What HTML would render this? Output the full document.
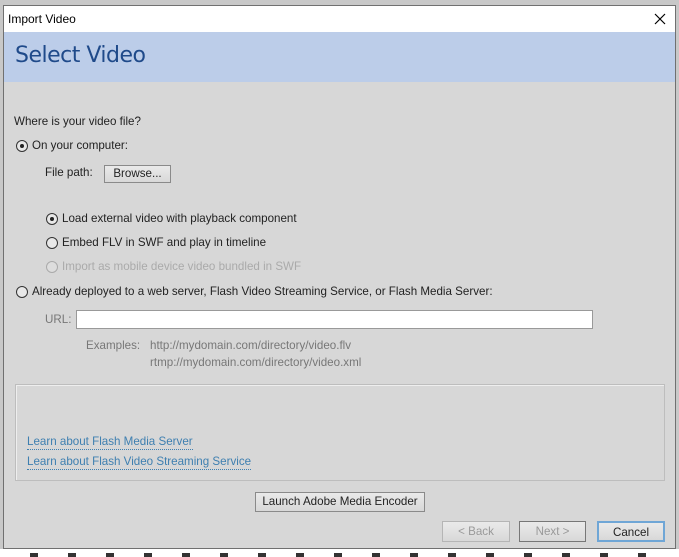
<!DOCTYPE html>
<html><head><style>
*{margin:0;padding:0;box-sizing:border-box}
body{width:679px;height:557px;overflow:hidden;background:#fff;font-family:"Liberation Sans",sans-serif;font-size:11.6px;color:#222;position:relative}
.abs{position:absolute;white-space:nowrap}
#bgl{position:absolute;left:0;top:0;width:679px;height:549px;background:#c8c8c8}
#win{position:absolute;left:3px;top:5px;width:673px;height:544px;border:1px solid #707070;background:#d7d7d7}
#title{position:absolute;left:0;top:0;width:671px;height:26px;background:#fff}
#hdr{position:absolute;left:0;top:26px;width:671px;height:50px;background:#bccde9}
.radio{position:absolute;width:12px;height:12px;border:1px solid #333;border-radius:50%;background:#e8e8e8}
.radio.on::after{content:"";position:absolute;left:3px;top:3px;width:4px;height:4px;border-radius:50%;background:#222}
.radio.dis{border-color:#aaa}
.btn{position:absolute;border:1px solid #8a8a8a;background:linear-gradient(#eaeaea,#d8d8d8);text-align:center;color:#222;font-size:11.6px}
.link{color:#3e7fb0;border-bottom:1px dotted #3e7fb0;line-height:14px}
.gray{color:#777}
.dis{color:#aaa}
</style></head><body>
<div id="bgl"></div>
<div id="win">
 <div id="title"></div>
 <div class="abs" style="left:4px;top:6px;font-size:12px;color:#000">Import Video</div>
 <svg class="abs" style="left:650px;top:7px" width="12" height="12"><path d="M1 1L11 11M11 1L1 11" stroke="#000" stroke-width="1.2"/></svg>
 <div id="hdr"></div>
 <div class="abs" style="left:11px;top:37px;font-family:'DejaVu Sans',sans-serif;font-size:22px;color:#1f4a8a;letter-spacing:-0.5px">Select Video</div>

 <div class="abs" style="left:10px;top:109px">Where is your video file?</div>
 <div class="radio on" style="left:12px;top:134px"></div>
 <div class="abs" style="left:28px;top:133px">On your computer:</div>
 <div class="abs" style="left:41px;top:160px">File path:</div>
 <div class="btn" style="left:100px;top:159px;width:67px;height:18px;line-height:16px">Browse...</div>

 <div class="radio on" style="left:42px;top:207px"></div>
 <div class="abs" style="left:58px;top:206px">Load external video with playback component</div>
 <div class="radio" style="left:42px;top:231px"></div>
 <div class="abs" style="left:58px;top:230px">Embed FLV in SWF and play in timeline</div>
 <div class="radio dis" style="left:42px;top:255px;background:#ddd"></div>
 <div class="abs dis" style="left:58px;top:254px">Import as mobile device video bundled in SWF</div>

 <div class="radio" style="left:12px;top:280px"></div>
 <div class="abs" style="left:28px;top:279px">Already deployed to a web server, Flash Video Streaming Service, or Flash Media Server:</div>
 <div class="abs gray" style="left:41px;top:307px">URL:</div>
 <div class="abs" style="left:72px;top:304px;width:517px;height:19px;background:#fff;border:1px solid #999"></div>
 <div class="abs gray" style="left:82px;top:333px">Examples:</div>
 <div class="abs gray" style="left:146px;top:333px">http://mydomain.com/directory/video.flv</div>
 <div class="abs gray" style="left:146px;top:350px">rtmp://mydomain.com/directory/video.xml</div>

 <div class="abs" style="left:11px;top:378px;width:650px;height:97px;border:1px solid #bdbdbd;box-shadow:inset 1px 1px 0 #eee"></div>
 <div class="abs link" style="left:23px;top:429px">Learn about Flash Media Server</div>
 <div class="abs link" style="left:23px;top:449px">Learn about Flash Video Streaming Service</div>

 <div class="btn" style="left:251px;top:486px;width:170px;height:20px;line-height:18px">Launch Adobe Media Encoder</div>
 <div class="btn" style="left:438px;top:515px;width:68px;height:21px;line-height:19px;color:#999;border-color:#b5b5b5">&lt; Back</div>
 <div class="btn" style="left:515px;top:515px;width:67px;height:21px;line-height:19px;color:#999;border-color:#777">Next &gt;</div>
 <div class="btn" style="left:593px;top:515px;width:68px;height:21px;line-height:19px;border:2px solid #6fa6d6">Cancel</div>
</div>
<div class="abs" style="left:30px;top:553px;width:640px;height:4px;background:repeating-linear-gradient(90deg,#333 0 8px,transparent 8px 38px)"></div>
</body></html>
